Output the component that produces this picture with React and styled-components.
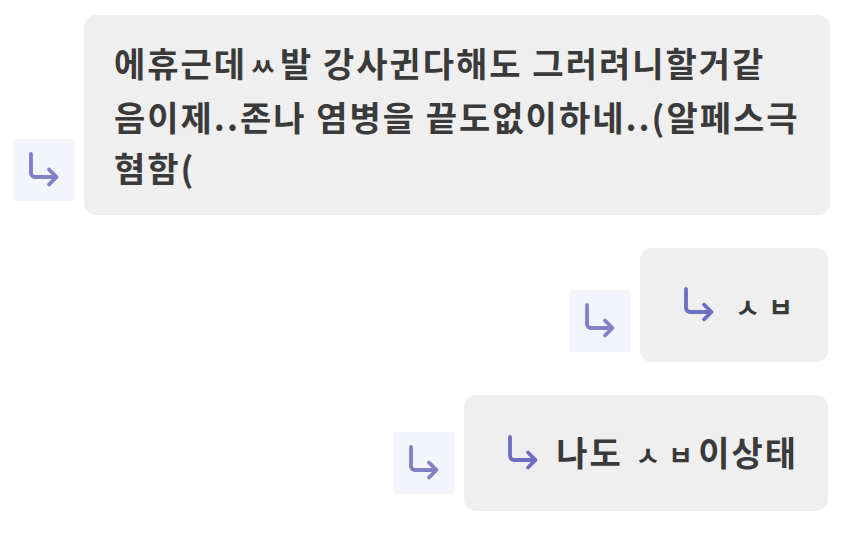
import React from 'react';
import styled, { createGlobalStyle } from 'styled-components';

const GlobalStyle = createGlobalStyle`
  html, body {
    margin: 0;
    padding: 0;
    background: #ffffff;
  }
  body {
    font-family: "Noto Sans CJK KR", "Noto Sans", sans-serif;
    color: #3a3a3a;
  }
`;

const Thread = styled.div`
  display: flex;
  flex-direction: column;
  gap: 33px;
  padding: 15px 28px 0 13px;
`;

const Row = styled.div`
  display: flex;
  align-items: flex-end;
  justify-content: ${p => (p.$mine ? 'flex-end' : 'flex-start')};
  gap: 9px;
`;

const ReplyMark = styled.div`
  width: 62px;
  height: 62px;
  flex: none;
  margin-bottom: ${p => p.$bottom}px;
  border-radius: 4px;
  background: #f4f4fc;
  display: flex;
  align-items: center;
  justify-content: center;
`;

const Bubble = styled.div`
  flex: ${p => (p.$wide ? 1 : 'none')};
  background: #efefef;
  border-radius: 12px;
  padding: ${p => p.$pad};
  font-size: 34px;
  font-weight: 700;
  line-height: 51px;
  letter-spacing: 2px;
  white-space: nowrap;
  display: flex;
  align-items: center;
  gap: 16px;
`;

const Lines = styled.div`
  display: flex;
  flex-direction: column;
`;

const Jamo = styled.span`
  font-size: 27px;
  margin: 0 3px;
`;

const Arrow = ({ color = '#6d6dc2' }) => (
  <svg width="34" height="38" viewBox="0 0 34 38" fill="none"
    stroke={color} strokeWidth="3.8" strokeLinecap="round" strokeLinejoin="round">
    <path d="M4 3 v19 a4 4 0 0 0 4 4 h21" />
    <path d="M22 18.5 l7.5 7.5 -7.5 7.5" />
  </svg>
);

export default function App() {
  return (
    <>
      <GlobalStyle />
      <Thread>
        <Row>
          <ReplyMark $bottom={14}>
            <Arrow color="#8080c6" />
          </ReplyMark>
          <Bubble $wide $pad="22px 30px 22px 30px">
            <Lines>
              <span>에휴근데<Jamo>ㅆ</Jamo>발 강사귄다해도 그러려니할거같</span>
              <span>음이제..존나 염병을 끝도없이하네..(알페스극</span>
              <span>혐함(</span>
            </Lines>
          </Bubble>
        </Row>
        <Row $mine>
          <ReplyMark $bottom={10}>
            <Arrow color="#8080c6" />
          </ReplyMark>
          <Bubble $pad="30px 30px 30px 42px">
            <Arrow />
            <span><Jamo>ㅅ</Jamo><Jamo>ㅂ</Jamo></span>
          </Bubble>
        </Row>
        <Row $mine>
          <ReplyMark $bottom={17}>
            <Arrow color="#8080c6" />
          </ReplyMark>
          <Bubble $pad="31px 30px 31px 42px">
            <Arrow />
            <span>나도 <Jamo>ㅅ</Jamo><Jamo>ㅂ</Jamo>이상태</span>
          </Bubble>
        </Row>
      </Thread>
    </>
  );
}
